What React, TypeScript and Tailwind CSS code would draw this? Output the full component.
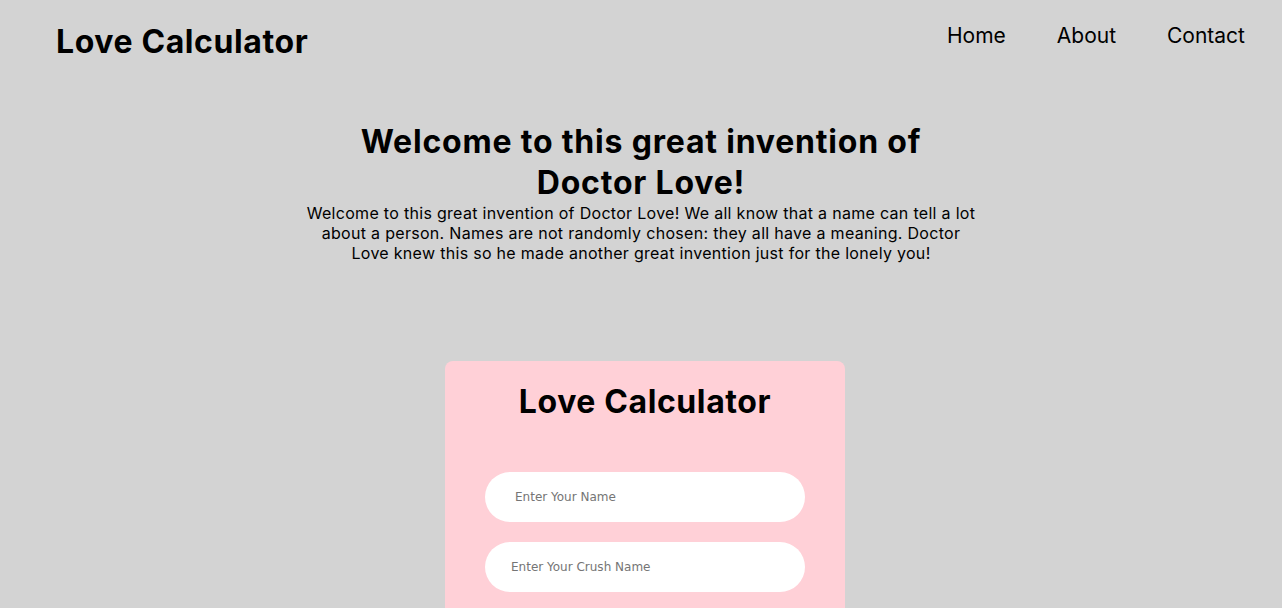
import { useState } from "react";

const App = () => {
  const [name, setName] = useState('');
  const [crush, setCrush] = useState('');

  return (
    <div className="min-h-[608px] bg-[#d3d3d3] text-black font-['Inter',sans-serif]">
      <header className="flex items-start justify-between pl-[56px] pr-[37px] pt-[22px]">
        <h2 className="text-[32px] font-bold leading-[40px] tracking-[0.6px]">Love Calculator</h2>
        <nav className="flex gap-[51px] pt-[1px] text-[21px] leading-[26px]">
          <a href="#">Home</a>
          <a href="#">About</a>
          <a href="#">Contact</a>
        </nav>
      </header>

      <section className="flex flex-col items-center mt-[59px]">
        <h1 className="max-w-[600px] text-center text-[32px] font-bold leading-[41px] tracking-[0.8px]">
          Welcome to this great invention of Doctor Love!
        </h1>
        <p className="max-w-[680px] text-center text-[16px] leading-[20px] tracking-[0.3px]">
          Welcome to this great invention of Doctor Love! We all know that a name can tell a lot about a person. Names are not randomly chosen: they all have a meaning. Doctor Love knew this so he made another great invention just for the lonely you!
        </p>
      </section>

      <div className="flex justify-center mt-[98px] pl-[8px]">
        <div className="w-[400px] rounded-lg bg-[#ffd0d7] flex flex-col items-center pt-[21px] pb-[40px]">
          <h2 className="text-[32px] font-bold leading-[40px] tracking-[0.6px]">Love Calculator</h2>
          <input
            type="text"
            placeholder="Enter Your Name"
            value={name}
            onChange={(e) => setName(e.target.value)}
            className="mt-[50px] w-[320px] h-[50px] rounded-[25px] bg-white pl-[30px] text-[12px] font-['DejaVu_Sans',sans-serif] outline-none placeholder-[#757575]"
          />
          <input
            type="text"
            placeholder="Enter Your Crush Name"
            value={crush}
            onChange={(e) => setCrush(e.target.value)}
            className="mt-[20px] w-[320px] h-[50px] rounded-[25px] bg-white pl-[26px] text-[12px] font-['DejaVu_Sans',sans-serif] outline-none placeholder-[#757575]"
          />
        </div>
      </div>
    </div>
  )
}

export default App
